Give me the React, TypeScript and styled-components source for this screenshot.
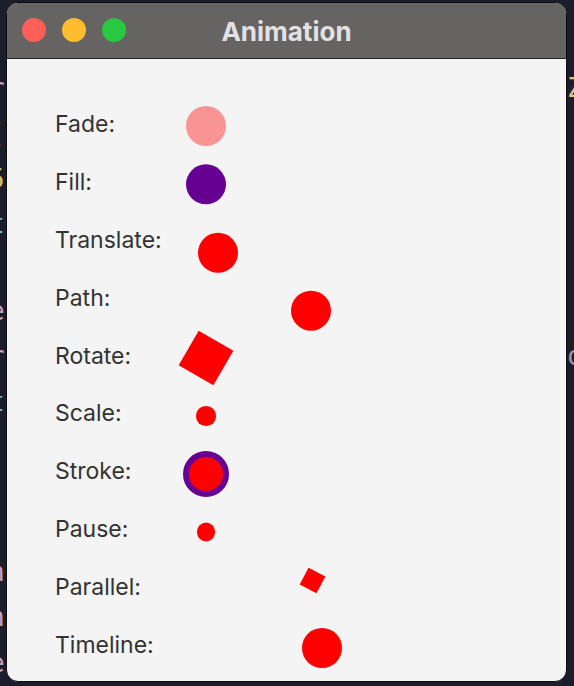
import React from "react";
import styled, { createGlobalStyle } from "styled-components";

const Global = createGlobalStyle`
  html, body { margin: 0; padding: 0; background: #1c1d2b; }
  * { box-sizing: border-box; }
`;

const Desktop = styled.div`
  position: relative;
  width: 574px;
  height: 686px;
  overflow: hidden;
  background: #1c1d2b;
`;

const CodeLayer = styled.div`
  position: absolute;
  inset: 0;
  display: flex;
  flex-direction: column;
  padding-top: 66px;
  font-family: "DejaVu Sans Mono", monospace;
  font-size: 26px;
`;

const CodeLine = styled.div`
  height: 45.3px;
  line-height: 45.3px;
  display: flex;
  justify-content: space-between;
  margin: 0 -9px 0 -11px;
`;

const Glyph = styled.span<{ $c: string }>`
  color: ${(p) => p.$c};
`;

const Window = styled.div`
  position: absolute;
  left: 6px;
  top: 2px;
  width: 561px;
  height: 680px;
  border-radius: 12px;
  overflow: hidden;
  display: flex;
  flex-direction: column;
  border: 1px solid #0c0c0e;
  box-shadow: inset 0 0 0 1px rgba(255, 255, 255, 0.18);
  background: #f4f4f4;
`;

const TitleBar = styled.div`
  position: relative;
  height: 56px;
  flex: none;
  display: flex;
  align-items: center;
  justify-content: center;
  background: #656462;
  border-bottom: 1px solid #232323;
`;

const Lights = styled.div`
  position: absolute;
  left: 15px;
  top: 15px;
  display: flex;
  gap: 16px;
`;

const Light = styled.span<{ $c: string }>`
  width: 24px;
  height: 24px;
  border-radius: 50%;
  background: ${(p) => p.$c};
`;

const Title = styled.div`
  font-family: "Inter", "Liberation Sans", sans-serif;
  font-weight: 700;
  font-size: 26px;
  color: #e2e2e2;
  margin-top: 1px;
`;

const Content = styled.div`
  flex: 1;
  display: flex;
  flex-direction: column;
  padding: 37px 0 0 48px;
`;

const Row = styled.div`
  height: 57.8px;
  display: flex;
  align-items: center;
`;

const Label = styled.div`
  width: 130px;
  font-family: "Inter", "Liberation Sans", sans-serif;
  font-size: 23px;
  color: #333333;
  line-height: 1;
`;

const Cell = styled.div`
  width: 42px;
  height: 42px;
  display: flex;
  align-items: center;
  justify-content: center;
  overflow: visible;
`;

const Shape = styled.div<{
  $size: number;
  $color: string;
  $round?: boolean;
  $dx?: number;
  $dy?: number;
  $rot?: number;
}>`
  flex: none;
  width: ${(p) => p.$size}px;
  height: ${(p) => p.$size}px;
  background: ${(p) => p.$color};
  border-radius: ${(p) => (p.$round ? "50%" : "0")};
  transform: translate(${(p) => p.$dx ?? 0}px, ${(p) => p.$dy ?? 0}px)
    rotate(${(p) => p.$rot ?? 0}deg);
`;

const StrokeRing = styled.div<{ $dy?: number }>`
  flex: none;
  width: 46px;
  height: 46px;
  border-radius: 50%;
  background: #ff0000;
  border: 6px solid #660093;
  transform: translateY(${(p) => p.$dy ?? 0}px);
`;

const codeLines: [string, string, string, string][] = [
  ["r", "#c9a0c0", "Z", "#d8d070"],
  ["(", "#d6b200", "", ""],
  ["5", "#c8c070", "", ""],
  ["t", "#6fb8c8", "", ""],
  ["", "", "", ""],
  ["e", "#c9a0c0", "", ""],
  ["r", "#c9a0c0", "o", "#9a9aa6"],
  ["t", "#6fb8c8", "", ""],
  ["", "", "", ""],
  ["", "", "", ""],
  ["", "", "", ""],
  ["n", "#c9a0c0", "", ""],
  ["n", "#c9a0c0", "", ""],
  ["e", "#c9a0c0", "", ""],
];

export default function App() {
  return (
    <>
      <Global />
      <Desktop>
        <CodeLayer>
          {codeLines.map(([l, lc, r, rc], i) => (
            <CodeLine key={i}>
              <Glyph $c={lc || "transparent"}>{l || " "}</Glyph>
              <Glyph $c={rc || "transparent"}>{r || " "}</Glyph>
            </CodeLine>
          ))}
        </CodeLayer>
        <Window>
          <TitleBar>
            <Lights>
              <Light $c="#fe5f57" />
              <Light $c="#febc2e" />
              <Light $c="#28c840" />
            </Lights>
            <Title>Animation</Title>
          </TitleBar>
          <Content>
            <Row>
              <Label>Fade:</Label>
              <Cell>
                <Shape $size={40} $round $color="#f99494" $dy={1} />
              </Cell>
            </Row>
            <Row>
              <Label>Fill:</Label>
              <Cell>
                <Shape $size={40} $round $color="#660093" $dy={1.3} />
              </Cell>
            </Row>
            <Row>
              <Label>Translate:</Label>
              <Cell>
                <Shape $size={40} $round $color="#ff0000" $dx={12} $dy={12.8} />
              </Cell>
            </Row>
            <Row>
              <Label>Path:</Label>
              <Cell>
                <Shape $size={40} $round $color="#ff0000" $dx={105} $dy={12.7} />
              </Cell>
            </Row>
            <Row>
              <Label>Rotate:</Label>
              <Cell>
                <Shape $size={40} $color="#ff0000" $dy={2} $rot={30} />
              </Cell>
            </Row>
            <Row>
              <Label>Scale:</Label>
              <Cell>
                <Shape $size={19.4} $round $color="#ff0000" $dy={2} />
              </Cell>
            </Row>
            <Row>
              <Label>Stroke:</Label>
              <Cell>
                <StrokeRing $dy={2} />
              </Cell>
            </Row>
            <Row>
              <Label>Pause:</Label>
              <Cell>
                <Shape $size={18.4} $round $color="#ff0000" $dy={2.5} />
              </Cell>
            </Row>
            <Row>
              <Label>Parallel:</Label>
              <Cell>
                <Shape $size={19} $color="#ff0000" $dx={106} $dy={-7} $rot={28} />
              </Cell>
            </Row>
            <Row>
              <Label>Timeline:</Label>
              <Cell>
                <Shape $size={40} $round $color="#ff0000" $dx={116} $dy={3} />
              </Cell>
            </Row>
          </Content>
        </Window>
      </Desktop>
    </>
  );
}
